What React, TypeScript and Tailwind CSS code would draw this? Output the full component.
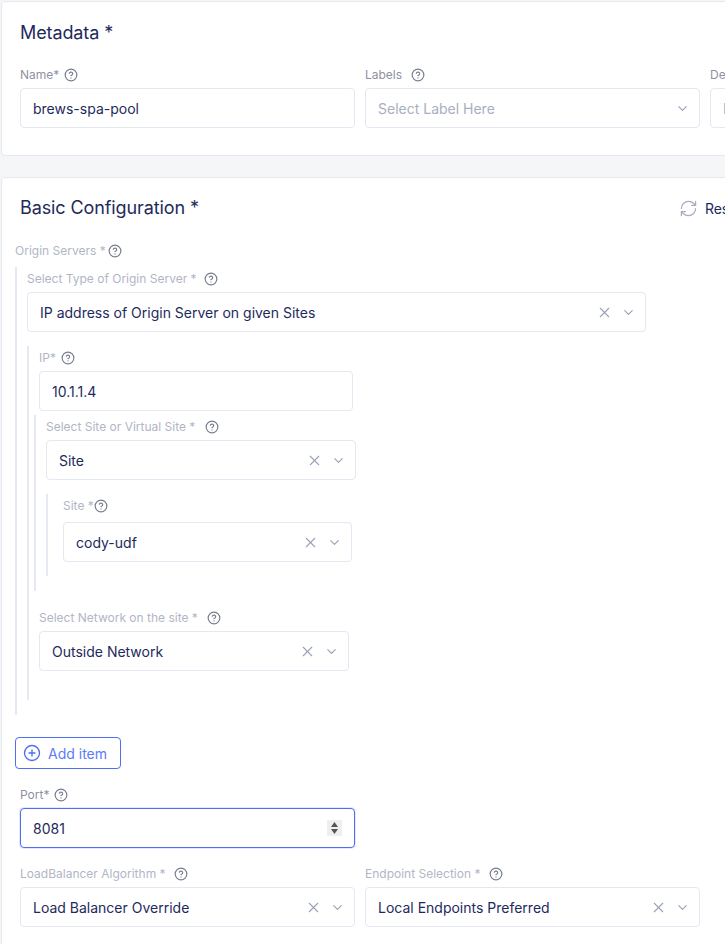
import { ChevronDown, CircleHelp, CirclePlus, RefreshCw, X } from "lucide-react";

function Label({ text, gap = "ml-[7px]", light = true }: { text: string; gap?: string; light?: boolean }) {
  return (
    <div className={`flex h-[18px] items-center text-[12px] ${light ? "text-[#b1b6c6]" : "text-[#8d92a3]"}`}>
      <span>{text}</span>
      <CircleHelp size={14} strokeWidth={2} className={`${gap} text-[#777d8f]`} />
    </div>
  );
}

function Select({ value, width, clear = true }: { value: string; width: string; clear?: boolean }) {
  return (
    <div className={`flex h-10 items-center rounded border border-[#e5e7f3] bg-white pl-3 pr-[9px] ${width}`}>
      <span className={`flex-1 text-[14px] ${value === "Select Label Here" ? "text-[#a9aec1]" : "text-[#1e2a5c]"}`}>{value}</span>
      {clear && <X size={17} strokeWidth={1.5} className="mr-2 text-[#9aa0b5]" />}
      <ChevronDown size={15} strokeWidth={1.8} className="text-[#9aa0b5]" />
    </div>
  );
}

function Input({ value, width }: { value: string; width: string }) {
  return (
    <div className={`flex h-10 items-center rounded border border-[#e5e7f3] bg-white pl-3 text-[14px] text-[#1e2a5c] ${width}`}>
      {value}
    </div>
  );
}

export default function App() {
  return (
    <div className="h-[944px] w-[725px] overflow-hidden bg-[#f5f6f8] pt-px font-['Inter',sans-serif]">
      <section className="ml-px h-[155px] w-[1000px] rounded border border-[#e6e8f0] bg-white pl-[18px] pt-5">
        <h2 className="h-[22px] text-[18px] leading-[22px] tracking-[-0.1px] text-[#1e2a5c]">Metadata *</h2>
        <div className="mt-[22px] flex gap-[10px]">
          <div className="w-[335px]">
            <div className="mb-1">
              <Label text="Name*" gap="ml-[5px]" light={false} />
            </div>
            <Input value="brews-spa-pool" width="w-[335px]" />
          </div>
          <div className="w-[335px]">
            <div className="mb-1">
              <Label text="Labels" gap="ml-[9px]" light={false} />
            </div>
            <Select value="Select Label Here" width="w-[335px]" clear={false} />
          </div>
          <div className="w-[335px]">
            <div className="mb-1">
              <Label text="Description" light={false} />
            </div>
            <div className="flex h-10 items-center rounded border border-[#e5e7f3] bg-white pl-3 text-[14px] text-[#a9aec1]">Enter Description</div>
          </div>
        </div>
      </section>

      <section className="ml-px mt-[21px] w-[1000px] rounded border border-[#e6e8f0] bg-white pb-10 pt-[18px]">
        <div className="ml-[18px] flex w-[722px] items-center justify-between">
          <h2 className="h-[24px] text-[18px] leading-[24px] tracking-[-0.1px] text-[#1e2a5c]">Basic Configuration *</h2>
          <div className="flex items-center gap-[7px] text-[14px] text-[#1e2a5c]">
            <RefreshCw size={19} strokeWidth={1.5} className="text-[#a5abc0]" />
            <span>Reset</span>
          </div>
        </div>

        <div className="ml-[13px] mt-[22px]">
          <Label text="Origin Servers *" gap="ml-[2px]" />
        </div>

        <div className="ml-[13px] mt-[7px] border-l-2 border-[#e6e8f5] pb-[15px] pl-[10px] pt-[3px]">
          <div className="mb-1">
            <Label text="Select Type of Origin Server *" />
          </div>
          <Select value="IP address of Origin Server on given Sites" width="w-[619px]" />

          <div className="mt-[14px] border-l-2 border-[#e6e8f5] pb-[29px] pl-[10px] pt-[3px]">
            <div className="mb-1">
              <Label text="IP*" gap="ml-[5px]" />
            </div>
            <Input value="10.1.1.4" width="w-[314px]" />

            <div className="-ml-[5px] mt-1 border-l-2 border-[#e6e8f5] pb-[15px] pl-[10px] pt-[3px]">
              <div className="mb-1">
                <Label text="Select Site or Virtual Site *" gap="ml-[10px]" />
              </div>
              <Select value="Site" width="w-[310px]" />

              <div className="mt-[14px] border-l-2 border-[#e6e8f5] pb-[14px] pl-[15px] pt-[3px]">
                <div className="mb-[7px]">
                  <Label text="Site *" gap="ml-0" />
                </div>
                <Select value="cody-udf" width="w-[289px]" />
              </div>
            </div>

            <div className="mb-1 mt-[18px]">
              <Label text="Select Network on the site *" gap="ml-[9px]" />
            </div>
            <Select value="Outside Network" width="w-[310px]" />
          </div>
        </div>

        <div className="ml-[13px] mt-[22px]">
          <button className="flex h-8 w-[106px] items-center gap-[7px] rounded border border-[#4d6ef5] bg-white pl-[7px] text-[14px] text-[#5b7cf7]">
            <CirclePlus size={18} strokeWidth={1.8} className="text-[#4d6ef5]" />
            Add item
          </button>
        </div>

        <div className="ml-[18px] mt-[17px] w-[335px]">
          <div className="mb-1">
            <Label text="Port*" gap="ml-[5px]" light={false} />
          </div>
          <div className="flex h-10 items-center rounded border border-[#4d6ef5] bg-white pl-3 pr-3 text-[14px] text-[#1e2a5c] shadow-[0_0_0_1px_rgba(77,110,245,0.15)]">
            <span className="flex-1">8081</span>
            <svg width="15" height="16" viewBox="0 0 15 16" className="bg-[#efefef]">
              <path d="M7.5 2 11 7H4Z" fill="#555" />
              <path d="M7.5 14 11 9H4Z" fill="#555" />
            </svg>
          </div>
        </div>

        <div className="ml-[18px] mt-[17px] flex gap-[10px]">
          <div className="w-[335px]">
            <div className="mb-1">
              <Label text="LoadBalancer Algorithm *" gap="ml-[8px]" />
            </div>
            <Select value="Load Balancer Override" width="w-[335px]" />
          </div>
          <div className="w-[335px]">
            <div className="mb-1">
              <Label text="Endpoint Selection *" gap="ml-[9px]" />
            </div>
            <Select value="Local Endpoints Preferred" width="w-[335px]" />
          </div>
        </div>
      </section>
    </div>
  );
}
